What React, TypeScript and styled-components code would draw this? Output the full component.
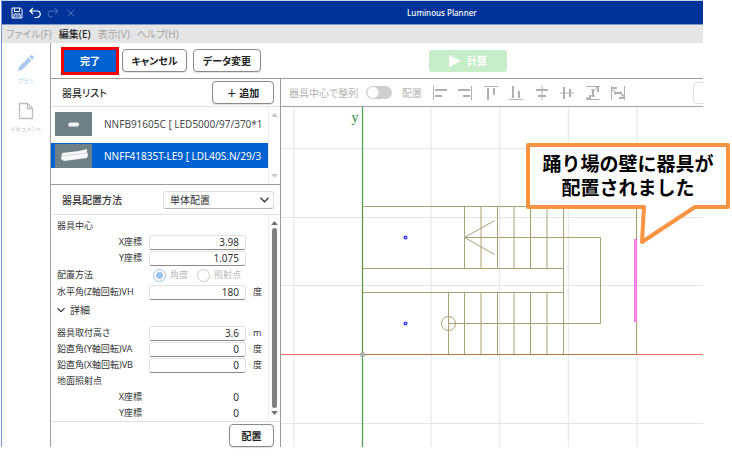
import React from "react";
import styled, { createGlobalStyle } from "styled-components";

const GlobalStyle = createGlobalStyle`
  * { box-sizing: border-box; }
  body {
    margin: 0;
    background: #fff;
    color: #333;
    font-family: "Noto Sans", "Noto Sans CJK JP", sans-serif;
    font-size: 10px;
    line-height: 16px;
    font-feature-settings: "palt";
  }
  button, input, select { font: inherit; color: inherit; font-feature-settings: inherit; }
`;

const Page = styled.div`
  padding: 0 29px 11px 1px;
`;

const Window = styled.div`
  border-left: 1px solid #7795d6;
  border-top: 1px solid #c3d3ee;
`;

const TitleBar = styled.header`
  display: grid;
  grid-template-columns: 7fr auto 4fr;
  align-items: center;
  height: 24px;
  padding: 0 0 0 9px;
  background: #003399;
  border-bottom: 1px solid #8097cc;
  color: #fff;
`;

const QuickActions = styled.div`
  display: flex;
  gap: 6px;
`;

const IconButton = styled.button<{ $size: number }>`
  display: flex;
  width: ${(p) => p.$size}px;
  height: ${(p) => p.$size}px;
  padding: 0;
  border: 0;
  background: none;
  color: inherit;
  &:disabled { color: #4e71bb; }
  svg { width: 100%; height: 100%; }
`;

const AppTitle = styled.h1`
  margin: 0;
  font-size: 8px;
  line-height: 16px;
  font-weight: 500;
`;

const MenuBar = styled.nav`
  display: flex;
  gap: 7px;
  height: 18px;
  padding: 0 4px;
  background: #e5e5e5;
`;

const MenuItem = styled.button<{ $active?: boolean }>`
  padding: 0;
  border: 0;
  background: none;
  line-height: 18px;
  color: ${(p) => (p.$active ? "#222" : "#a6a6a6")};
  font-weight: ${(p) => (p.$active ? 500 : 400)};
`;

const Body = styled.div`
  display: grid;
  grid-template-columns: 48px 1fr;
`;

const Rail = styled.aside`
  display: flex;
  flex-direction: column;
  align-items: center;
  gap: 14px;
  padding-top: 11px;
`;

const RailItem = styled.button<{ $color: string }>`
  display: flex;
  flex-direction: column;
  align-items: center;
  gap: 2px;
  padding: 0;
  border: 0;
  background: none;
  color: ${(p) => p.$color};
  font-size: 6px;
  line-height: 14px;
  svg { width: 18px; height: 18px; }
`;

const Main = styled.main`
  border-left: 1px solid #a0a0a0;
  min-width: 0;
`;

const ActionBar = styled.div`
  display: flex;
  align-items: center;
  gap: 6px;
  height: 36px;
  padding-left: 10px;
  border-bottom: 1px solid #9b9b9b;
`;

const Button = styled.button<{ $width: number }>`
  width: ${(p) => p.$width}px;
  height: 23px;
  padding: 0;
  border: 1px solid #8a8a8a;
  border-radius: 4px;
  background: #fff;
  color: #222;
  font-weight: 600;
  line-height: 20px;
  white-space: nowrap;
  box-shadow: 0 1px 1px rgba(0, 0, 0, 0.12);
`;

const DoneButton = styled(Button)`
  height: 28px;
  margin-right: -3px;
  border: 3px solid #f50000;
  border-radius: 0;
  background: #0061d1;
  color: #fff;
  box-shadow: none;
`;

const CalcButton = styled.button`
  display: flex;
  align-items: center;
  justify-content: center;
  gap: 6px;
  width: 78px;
  height: 22px;
  margin-left: 162px;
  padding: 0;
  border: 0;
  border-radius: 3px;
  background: #c4edc8;
  color: #fff;
  font-weight: 700;
  svg { width: 12px; height: 12px; }
`;

const Workspace = styled.div`
  display: grid;
  grid-template-columns: 230px 1fr;
`;

const Panel = styled.section`
  display: flex;
  flex-direction: column;
  border-right: 1px solid #9b9b9b;
`;

const PanelHeader = styled.div<{ $height: number }>`
  display: flex;
  align-items: center;
  justify-content: space-between;
  height: ${(p) => p.$height}px;
  padding: 0 6px 0 11px;
  border-bottom: 1px solid #e3e3e3;
`;

const PanelTitle = styled.h2`
  margin: 0;
  font-size: 10px;
  line-height: 16px;
  font-weight: 500;
`;

const ScrollArea = styled.div<{ $rule?: string }>`
  display: grid;
  grid-template-columns: 1fr 12px;
  border-bottom: 1px solid ${(p) => p.$rule ?? "#e0e0e0"};
`;

const ScrollTrack = styled.div<{ $color: string }>`
  display: flex;
  flex-direction: column;
  align-items: center;
  justify-content: space-between;
  gap: 3px;
  padding: 6px 0;
  border-left: 1px solid #ececec;
  color: ${(p) => p.$color};
  svg { width: 7px; height: 4px; flex: none; }
`;

const ScrollThumb = styled.div`
  flex: 1;
  width: 5px;
  border-radius: 3px;
  background: #808080;
`;

const FixtureList = styled.ul`
  display: flex;
  flex-direction: column;
  gap: 7px;
  min-width: 0;
  height: 77px;
  margin: 0;
  padding: 4px 0 0;
  list-style: none;
`;

const FixtureRow = styled.li<{ $selected?: boolean }>`
  display: flex;
  align-items: center;
  gap: 12px;
  height: 25px;
  padding: 0 5px 0 4px;
  background: ${(p) => (p.$selected ? "#0061d1" : "#fff")};
  color: ${(p) => (p.$selected ? "#fff" : "#4a4a4a")};
  svg { width: 37px; height: 24px; flex: none; background: #6f8187; }
`;

const FixtureName = styled.span`
  overflow: hidden;
  white-space: nowrap;
`;

const SelectBox = styled.div`
  display: grid;
  align-items: center;
  width: 111px;
  > * { grid-area: 1 / 1; }
  svg { justify-self: end; width: 9px; height: 6px; margin-right: 5px; pointer-events: none; }
`;

const Select = styled.select`
  appearance: none;
  height: 18px;
  padding: 0 6px;
  border: 1px solid #dedede;
  border-bottom-color: #b5b5b5;
  border-radius: 3px;
  background: #fff;
  line-height: 14px;
`;

const Form = styled.form`
  padding: 3px 0 0 6px;
`;

const Row = styled.div<{ $height?: number }>`
  display: grid;
  grid-template-columns: 85px 97px 1fr;
  align-items: center;
  height: ${(p) => p.$height ?? 16}px;
  font-size: 9px;
  column-gap: 7px;
`;

const Label = styled.label<{ $right?: boolean }>`
  text-align: ${(p) => (p.$right ? "right" : "left")};
  white-space: nowrap;
`;

const Input = styled.input`
  width: 100%;
  height: 15px;
  padding: 0 6px;
  border: 1px solid #e2e2e2;
  border-bottom-color: #8a8a8a;
  border-radius: 3px;
  font-size: 10px;
  line-height: 13px;
  text-align: right;
`;

const Output = styled.output`
  padding-right: 7px;
  font-size: 10px;
  text-align: right;
`;

const RadioGroup = styled.div`
  display: flex;
  gap: 9px;
  padding-left: 4px;
  color: #b8b8b8;
`;

const RadioLabel = styled.label`
  display: flex;
  align-items: center;
  gap: 4px;
  white-space: nowrap;
`;

const Radio = styled.input`
  appearance: none;
  width: 13px;
  height: 13px;
  margin: 0;
  border: 1px solid #c8c8c8;
  border-radius: 50%;
  background: #fff;
  &:checked {
    border-color: #9cc4ef;
    background: radial-gradient(circle, #9cc4ef 0 3px, #fff 4px);
  }
`;

const Disclosure = styled.button`
  display: flex;
  align-items: center;
  gap: 5px;
  height: 20px;
  margin-bottom: 5px;
  padding: 0;
  border: 0;
  background: none;
  svg { width: 8px; height: 6px; }
`;

const PanelFooter = styled.div`
  display: flex;
  justify-content: flex-end;
  padding: 2px 6px 0;
`;

const View = styled.section`
  display: flex;
  flex-direction: column;
  min-width: 0;
`;

const Toolbar = styled.div`
  display: flex;
  align-items: center;
  height: 28px;
  padding-left: 8px;
  border-bottom: 1px solid #a0a0a0;
  color: #b3b3b3;
  white-space: nowrap;
  overflow: hidden;
`;

const SwitchLabel = styled.label`
  display: flex;
  align-items: center;
  gap: 7px;
  width: 113px;
  justify-content: space-between;
  padding-right: 10px;
`;

const Switch = styled.input`
  appearance: none;
  width: 26px;
  height: 13px;
  margin: 0;
  border-radius: 7px;
  background: radial-gradient(circle at 7px 50%, #fff 0 5px, #cfcfcf 6px);
`;

const AlignTools = styled.div`
  display: flex;
  justify-content: space-between;
  width: 192px;
  margin-left: 11px;
`;

const ToolButton = styled(IconButton)`
  &:disabled { color: #b0b0b0; }
`;

const ClippedButton = styled.button`
  flex: none;
  width: 24px;
  height: 22px;
  margin: 0 -14px 0 auto;
  border: 1px solid #ddd;
  border-radius: 4px;
  background: #fff;
`;

const Canvas = styled.div`
  position: relative;
  flex: 1;
  display: flex;
`;

const Plan = styled.svg`
  width: 100%;
  height: 340px;
`;

const Callout = styled.div`
  position: absolute;
  top: 36px;
  left: 245px;
  width: 204px;
  height: 102px;
`;

const CalloutShape = styled.svg`
  position: absolute;
  inset: 0;
  width: 100%;
  height: 100%;
`;

const CalloutText = styled.p`
  position: relative;
  margin: 0;
  padding-top: 8px;
  color: #000;
  font-family: "Noto Sans CJK JP", sans-serif;
  font-feature-settings: normal;
  font-size: 19px;
  line-height: 24px;
  font-weight: 700;
  text-align: center;
`;

const stroke = { fill: "none", stroke: "currentColor" };

const SaveIcon = () => (
  <svg viewBox="0 0 12 12" {...stroke}>
    <path d="M1 1h8.500L11 2.500V11H1zM3.500 1v3.500h5V1M3 11V7h6v4M4.500 9h3" />
  </svg>
);
const UndoIcon = () => (
  <svg viewBox="0 0 12 12" {...stroke} strokeWidth="1.200">
    <path d="M4 1L1 4l3 3M1 4h7a3 3 0 0 1 0 6.500H5.500" />
  </svg>
);
const RedoIcon = () => (
  <svg viewBox="0 0 12 12" {...stroke}>
    <path d="M8 1l3 3-3 3M11 4H4a3 3 0 0 0 0 6h1.500" />
  </svg>
);
const CloseIcon = () => (
  <svg viewBox="0 0 12 12" {...stroke}>
    <path d="M2.500 2.500l7 7M9.500 2.500l-7 7" />
  </svg>
);
const PencilIcon = () => (
  <svg viewBox="0 0 18 18" fill="currentColor">
    <path d="M1 17l1.200-4.200L11.500 3.500l3 3-9.300 9.300zM12.300 2.700l1.400-1.400c.5-.5 1-.5 1.500 0l1.500 1.500c.5.5.5 1 0 1.500l-1.400 1.400z" />
  </svg>
);
const DocumentIcon = () => (
  <svg viewBox="0 0 18 18" {...stroke} strokeWidth="1.300">
    <path d="M2.500 1.500h8l5 5v10h-13zM10.500 1.500v5h5" />
  </svg>
);
const Chevron = () => (
  <svg viewBox="0 0 9 6" {...stroke} strokeWidth="1.300">
    <path d="M.5.8l4 4 4-4" />
  </svg>
);
const ArrowUp = () => (
  <svg viewBox="0 0 7 4" fill="currentColor"><path d="M3.500 0L7 4H0z" /></svg>
);
const ArrowDown = () => (
  <svg viewBox="0 0 7 4" fill="currentColor"><path d="M0 0h7L3.500 4z" /></svg>
);

const alignTools = [
  { name: "左揃え", line: "M.5 0v14", bars: "M2 4h12M2 10h7" },
  { name: "右揃え", line: "M13.500 0v14", bars: "M0 4h12M5 10h7" },
  { name: "上揃え", line: "M0 .5h14", bars: "M4 2v12M10 2v7" },
  { name: "下揃え", line: "M0 13.500h14", bars: "M4 0v12M10 5v7" },
  { name: "左右中央", line: "M7 0v14", bars: "M1 4h12M3 10h8" },
  { name: "上下中央", line: "M0 7h14", bars: "M4 1v12M10 3v8" },
  { name: "上下等間隔", line: "M0 .5h14M0 13.500h14M5 4h4M5 10h4M10 1v2.500", bars: "M7 3v8M12 1v5M4 9v4M1.500 11v2" },
  { name: "左右等間隔", line: "M.5 0v14M13.500 0v14M4 5v4M10 5v4M1 4.500h2.500", bars: "M3 7h8M1 2h5M8 12h5M10.500 9.500h2.500" },
];

const GRID = 68.6;
const steps = [102, 118.5, 135, 151.5, 168, 184.5];

const FloorPlan = () => (
  <Plan role="img" aria-label="階段平面図">
    <g transform="translate(81.5 247.5)" fill="none">
      <g stroke="#e4e4e4">
        {[-1, 1, 2, 3, 4].map((n) => (
          <path key={n} d={`M${n * GRID} -248V93`} />
        ))}
        {[-3, -2, -1, 1].map((n) => (
          <path key={n} d={`M-82 ${Math.round(n * GRID)}H2000`} />
        ))}
      </g>
      <path d="M-82 0H2000" stroke="#f56b6b" />
      <path d="M0 -248V93" stroke="#4fa357" strokeWidth="1.300" />
      <g stroke="#a9a075">
        <path d="M0 0V-148H274V0M0 -86H201M0 -62H201M201 -148V0" />
        {steps.map((x) => (
          <path key={x} d={`M${x} -148V-86M${x} -62V0`} />
        ))}
        <path d="M86 -62V0M86 -31H238V-117H102M132 -134L102 -117L132 -100" />
        <circle cx="86" cy="-31" r="7" />
      </g>
      <path d="M0 0H274" stroke="#b4753f" />
      <path d="M0 -148V0" stroke="#6f9148" />
      <circle r="2.500" fill="#aaa" />
      <g stroke="#3c3cff" strokeWidth="1.500">
        <circle cx="43" cy="-117" r="1.300" />
        <circle cx="43" cy="-31" r="1.300" />
      </g>
      <rect x="272" y="-115" width="2" height="82" fill="#ff8fec" stroke="#fa75e0" />
      <text x="-11" y="-233" fill="#2f8a3a" fontFamily="Liberation Serif" fontSize="14">y</text>
    </g>
  </Plan>
);

const NumberRow = ({ id, label, value, unit, right, height }: {
  id: string; label: string; value: string; unit?: string; right?: boolean; height?: number;
}) => (
  <Row $height={height}>
    <Label htmlFor={id} $right={right}>{label}</Label>
    <Input id={id} defaultValue={value} />
    <span>{unit}</span>
  </Row>
);

export default function App() {
  return (
    <Page>
      <GlobalStyle />
      <Window>
        <TitleBar>
          <QuickActions>
            <IconButton $size={12} aria-label="保存"><SaveIcon /></IconButton>
            <IconButton $size={12} aria-label="元に戻す"><UndoIcon /></IconButton>
            <IconButton $size={12} aria-label="やり直し" disabled><RedoIcon /></IconButton>
            <IconButton $size={12} aria-label="閉じる" disabled><CloseIcon /></IconButton>
          </QuickActions>
          <AppTitle>Luminous Planner</AppTitle>
        </TitleBar>
        <MenuBar>
          <MenuItem>ファイル(F)</MenuItem>
          <MenuItem $active>編集(E)</MenuItem>
          <MenuItem>表示(V)</MenuItem>
          <MenuItem>ヘルプ(H)</MenuItem>
        </MenuBar>
        <Body>
          <Rail>
            <RailItem $color="#a9cbf2"><PencilIcon />プラン</RailItem>
            <RailItem $color="#bfbfbf"><DocumentIcon />ドキュメント</RailItem>
          </Rail>
          <Main>
            <ActionBar>
              <DoneButton $width={58}>完了</DoneButton>
              <Button $width={65}>キャンセル</Button>
              <Button $width={68}>データ変更</Button>
              <CalcButton>
                <svg viewBox="0 0 12 12" fill="currentColor"><path d="M0 0l12 6-12 6z" /></svg>
                計算
              </CalcButton>
            </ActionBar>
            <Workspace>
              <Panel>
                <PanelHeader $height={28}>
                  <PanelTitle>器具リスト</PanelTitle>
                  <Button $width={62}>＋ 追加</Button>
                </PanelHeader>
                <ScrollArea $rule="#9b9b9b">
                  <FixtureList>
                    <FixtureRow>
                      <svg viewBox="0 0 37 24">
                        <path d="M13 12l2-1.500h8l1 1v2l-1.500 1H14z" fill="#f4f4f4" />
                      </svg>
                      <FixtureName>NNFB91605C [ LED5000/97/370*1</FixtureName>
                    </FixtureRow>
                    <FixtureRow $selected>
                      <svg viewBox="0 0 37 24">
                        <path d="M7 9l17-2 8-2v3l1 3-1 3-23 3-3-2z" fill="#f7f7f7" />
                        <path d="M7 12l25-3" stroke="#d5d9da" />
                      </svg>
                      <FixtureName>NNFF41835T-LE9 [ LDL40S.N/29/3</FixtureName>
                    </FixtureRow>
                  </FixtureList>
                  <ScrollTrack $color="#c9c9c9"><ArrowUp /><ArrowDown /></ScrollTrack>
                </ScrollArea>
                <PanelHeader $height={30}>
                  <PanelTitle as="label" htmlFor="method">器具配置方法</PanelTitle>
                  <SelectBox>
                    <Select id="method"><option>単体配置</option></Select>
                    <Chevron />
                  </SelectBox>
                </PanelHeader>
                <ScrollArea>
                  <Form>
                    <Row>器具中心</Row>
                    <NumberRow id="cx" label="X座標" value="3.98" right />
                    <NumberRow id="cy" label="Y座標" value="1.075" right />
                    <Row $height={18}>
                      <span>配置方法</span>
                      <RadioGroup role="radiogroup" aria-label="配置方法">
                        <RadioLabel><Radio type="radio" name="aim" defaultChecked disabled />角度</RadioLabel>
                        <RadioLabel><Radio type="radio" name="aim" disabled />照射点</RadioLabel>
                      </RadioGroup>
                    </Row>
                    <NumberRow id="vh" label="水平角(Z軸回転)VH" value="180" unit="度" />
                    <Disclosure type="button" aria-expanded="true"><Chevron />詳細</Disclosure>
                    <NumberRow id="height" label="器具取付高さ" value="3.6" unit="m" />
                    <NumberRow id="va" label="鉛直角(Y軸回転)VA" value="0" unit="度" />
                    <NumberRow id="vb" label="鉛直角(X軸回転)VB" value="0" unit="度" />
                    <Row>地面照射点</Row>
                    <Row><Label htmlFor="gx" $right>X座標</Label><Output id="gx">0</Output></Row>
                    <Row><Label htmlFor="gy" $right>Y座標</Label><Output id="gy">0</Output></Row>
                  </Form>
                  <ScrollTrack $color="#707070"><ArrowUp /><ScrollThumb /><ArrowDown /></ScrollTrack>
                </ScrollArea>
                <PanelFooter>
                  <Button $width={45}>配置</Button>
                </PanelFooter>
              </Panel>
              <View>
                <Toolbar>
                  <SwitchLabel>
                    器具中心で整列
                    <Switch type="checkbox" role="switch" disabled />
                  </SwitchLabel>
                  <span>配置</span>
                  <AlignTools>
                    {alignTools.map((t) => (
                      <ToolButton key={t.name} $size={14} aria-label={t.name} disabled>
                        <svg viewBox="0 0 14 14" {...stroke}>
                          <path d={t.line} />
                          <path d={t.bars} strokeWidth="2" />
                        </svg>
                      </ToolButton>
                    ))}
                  </AlignTools>
                  <ClippedButton aria-label="表示設定" disabled />
                </Toolbar>
                <Canvas>
                  <FloorPlan />
                  <Callout role="note">
                    <CalloutShape viewBox="0 0 204 102">
                      <path
                        d="M2 2H202V64H169L116 99L118 64H2Z"
                        fill="#fff"
                        stroke="#fb9442"
                        strokeWidth="4"
                        strokeLinejoin="round"
                      />
                    </CalloutShape>
                    <CalloutText>踊り場の壁に器具が<br />配置されました</CalloutText>
                  </Callout>
                </Canvas>
              </View>
            </Workspace>
          </Main>
        </Body>
      </Window>
    </Page>
  );
}
